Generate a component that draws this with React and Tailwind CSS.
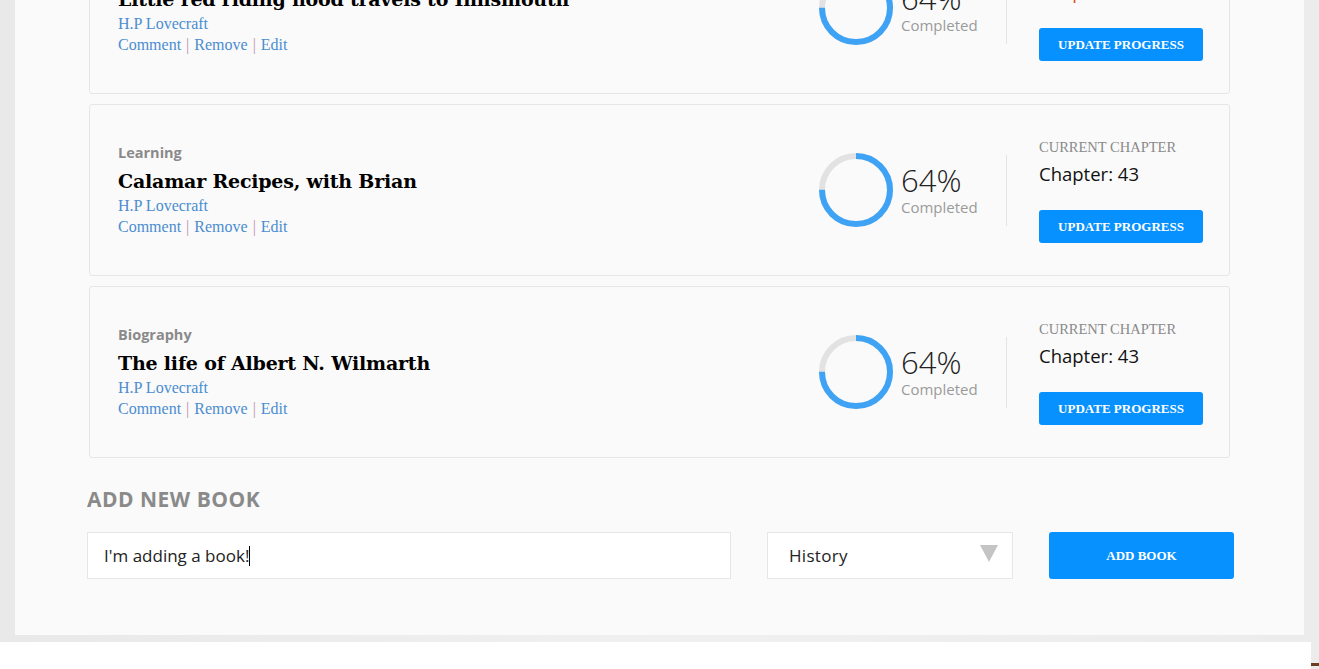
import React from 'react';

const slab = { fontFamily: '"DejaVu Serif", serif' };

const books = [
  { category: 'Horror', title: 'Little red riding hood travels to Innsmouth', chapterColor: 'text-[#e0481f]' },
  { category: 'Learning', title: 'Calamar Recipes, with Brian', chapterColor: 'text-[#111]' },
  { category: 'Biography', title: 'The life of Albert N. Wilmarth', chapterColor: 'text-[#111]' },
];

const Ring = ({ percent }) => {
  const r = 34;
  const c = 2 * Math.PI * r;
  return (
    <svg width="74" height="74" viewBox="0 0 74 74" className="shrink-0">
      <circle cx="37" cy="37" r={r} fill="none" stroke="#e2e2e2" strokeWidth="6" />
      <circle
        cx="37"
        cy="37"
        r={r}
        fill="none"
        stroke="#3fa3f5"
        strokeWidth="6"
        strokeDasharray={`${c * percent} ${c}`}
        transform="rotate(-90 37 37)"
      />
    </svg>
  );
};

const Pipe = () => <span className="text-[#c290b0] mx-[5px]">|</span>;

const BookCard = ({ book }) => {
  return (
    <div className="ml-[2px] mr-[4px] h-[172px] border border-[#e6e6e6] rounded-[3px] bg-[#fafafa] flex items-center pl-[28px] pr-[26px]">
      {/* Left - info */}
      <div className="flex-1 min-w-0">
        <div className="text-[14.5px] leading-[20px] font-bold text-[#8a8a8a] font-['Open_Sans',sans-serif]">{book.category}</div>
        <div className="mt-[4px] text-[19px] leading-[28px] font-bold text-black tracking-[-0.2px]" style={slab}>{book.title}</div>
        <div className="text-[16px] leading-[21px] text-[#4a8dd0] font-['Liberation_Serif',serif]">H.P Lovecraft</div>
        <div className="text-[16px] leading-[21px] text-[#4a8dd0] font-['Liberation_Serif',serif]">
          Comment<Pipe />Remove<Pipe />Edit
        </div>
      </div>

      {/* Middle - progress */}
      <Ring percent={0.75} />
      <div className="ml-[8px] w-[105px] font-['Open_Sans',sans-serif]">
        <div className="text-[31px] leading-[34px] font-light text-[#222]">64%</div>
        <div className="text-[15px] leading-[20px] text-[#9a9a9a]">Completed</div>
      </div>
      <div className="w-px h-[71px] bg-[#e4e4e4]" />

      {/* Right - chapter */}
      <div className="ml-[32px] w-[164px]">
        <div className="text-[14.5px] leading-[20px] text-[#8a8a8a] uppercase font-['Liberation_Serif',serif]">Current Chapter</div>
        <div className={`mt-[5px] text-[18.5px] leading-[24px] font-['Open_Sans',sans-serif] ${book.chapterColor}`}>Chapter: 43</div>
        <button className="mt-[24px] w-[164px] h-[33px] rounded-[3px] bg-[#0791fe] text-white text-[13px] font-bold uppercase font-['Liberation_Serif',serif]">
          Update Progress
        </button>
      </div>
    </div>
  );
};

export default function App() {
  return (
    <div className="w-full h-[669px] overflow-hidden bg-white">
      <div className="h-[642px] bg-[#ececec] bg-gradient-to-r from-[#e9e9e9] via-[#f0f0f0] to-[#ececec] pl-[15px] pr-[15px] pb-[7px]">
        <div className="h-[635px] bg-[#fafafa] overflow-hidden pl-[72px] pr-[70px]">
          <div className="-mt-[78px] flex flex-col gap-[10px]">
            {books.map((b) => (
              <BookCard key={b.title} book={b} />
            ))}
          </div>

          {/* Add new book */}
          <h2 className="mt-[27px] text-[21px] leading-[28px] font-bold text-[#8a8a8a] uppercase tracking-[0.5px] font-['Open_Sans',sans-serif]">Add new book</h2>
          <div className="mt-[19px] flex items-center gap-[36px]">
            <div className="flex-1 h-[47px] bg-white border border-[#e6e6e6] flex items-center pl-[16px] text-[17px] text-[#222] font-['Open_Sans',sans-serif]">
              I'm adding a book!<span className="inline-block w-px h-[20px] bg-black" />
            </div>
            <div className="w-[246px] h-[47px] bg-white border border-[#e6e6e6] flex items-center justify-between pl-[21px] pr-[14px] text-[17px] tracking-[0.3px] text-[#222] font-['Open_Sans',sans-serif]">
              <span>History</span>
              <span className="w-0 h-0 border-l-[9px] border-r-[9px] border-t-[17px] border-l-transparent border-r-transparent border-t-[#c4c4c4] -mt-[4px]" />
            </div>
            <button className="w-[185px] h-[47px] rounded-[3px] bg-[#0791fe] text-white text-[13px] font-bold uppercase font-['Liberation_Serif',serif]">
              Add Book
            </button>
          </div>
        </div>
      </div>
      <div className="h-[27px] flex">
        <div className="flex-1 bg-white" />
        <div className="w-[8px] bg-[#ececec] flex flex-col justify-end">
          <div className="h-[3px] mb-[3px] bg-[#6b3f22]" />
        </div>
      </div>
    </div>
  );
}
